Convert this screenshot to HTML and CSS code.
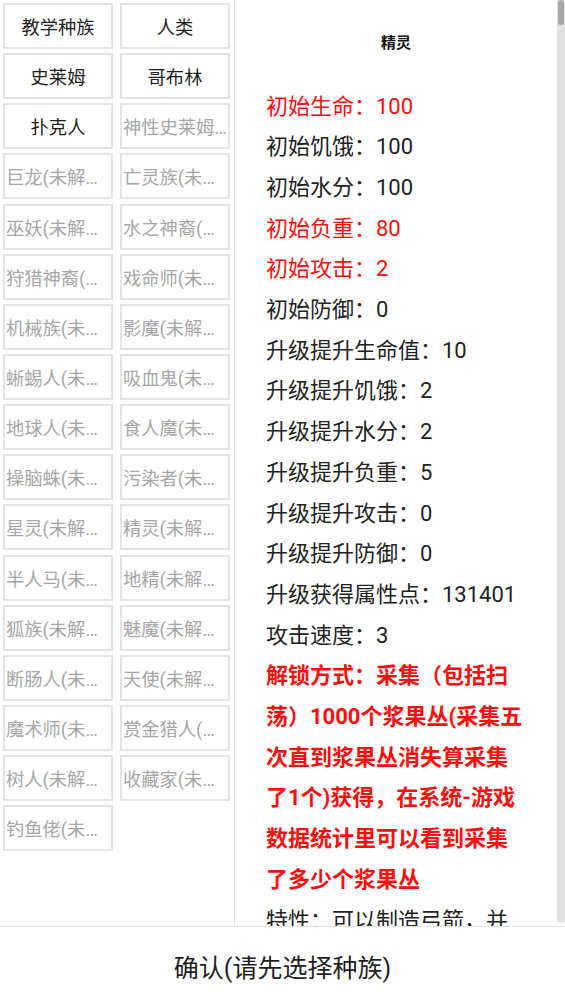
FILE: index.html
```html
<!DOCTYPE html>
<html lang="zh-CN">
<head>
<meta charset="utf-8">
<title>选择种族</title>
<link rel="stylesheet" href="styles.css">
</head>
<body>
<div class="app">
  <div class="main">
    <div class="races">
      <div class="race">教学种族</div>
      <div class="race">人类</div>
      <div class="race">史莱姆</div>
      <div class="race">哥布林</div>
      <div class="race">扑克人</div>
      <div class="race locked">神性史莱姆…</div>
      <div class="race locked">巨龙(未解…</div>
      <div class="race locked">亡灵族(未…</div>
      <div class="race locked">巫妖(未解…</div>
      <div class="race locked">水之神裔(…</div>
      <div class="race locked">狩猎神裔(…</div>
      <div class="race locked">戏命师(未…</div>
      <div class="race locked">机械族(未…</div>
      <div class="race locked">影魔(未解…</div>
      <div class="race locked">蜥蜴人(未…</div>
      <div class="race locked">吸血鬼(未…</div>
      <div class="race locked">地球人(未…</div>
      <div class="race locked">食人魔(未…</div>
      <div class="race locked">操脑蛛(未…</div>
      <div class="race locked">污染者(未…</div>
      <div class="race locked">星灵(未解…</div>
      <div class="race locked">精灵(未解…</div>
      <div class="race locked">半人马(未…</div>
      <div class="race locked">地精(未解…</div>
      <div class="race locked">狐族(未解…</div>
      <div class="race locked">魅魔(未解…</div>
      <div class="race locked">断肠人(未…</div>
      <div class="race locked">天使(未解…</div>
      <div class="race locked">魔术师(未…</div>
      <div class="race locked">赏金猎人(…</div>
      <div class="race locked">树人(未解…</div>
      <div class="race locked">收藏家(未…</div>
      <div class="race locked">钓鱼佬(未…</div>
    </div>
    <div class="detail">
      <div class="detail-body">
        <div class="title">精灵</div>
        <div class="stat red">初始生命：100</div>
        <div class="stat">初始饥饿：100</div>
        <div class="stat">初始水分：100</div>
        <div class="stat red">初始负重：80</div>
        <div class="stat red">初始攻击：2</div>
        <div class="stat">初始防御：0</div>
        <div class="stat">升级提升生命值：10</div>
        <div class="stat">升级提升饥饿：2</div>
        <div class="stat">升级提升水分：2</div>
        <div class="stat">升级提升负重：5</div>
        <div class="stat">升级提升攻击：0</div>
        <div class="stat">升级提升防御：0</div>
        <div class="stat">升级获得属性点：131401</div>
        <div class="stat">攻击速度：3</div>
        <div class="stat red bold">解锁方式：采集（包括扫荡）1000个浆果丛(采集五次直到浆果丛消失算采集了1个)获得，在系统-游戏数据统计里可以看到采集了多少个浆果丛</div>
        <div class="stat">特性：可以制造弓箭，并</div>
      </div>
      <div class="scrollbar"><div class="thumb"></div></div>
    </div>
  </div>
  <div class="confirm">确认(请先选择种族)</div>
</div>
</body>
</html>
```

FILE: styles.css
```css
html, body {
  margin: 0;
  padding: 0;
  background: #ffffff;
}

body {
  font-family: Roboto, "Noto Sans CJK SC", sans-serif;
  color: #222222;
}

.app {
  width: 565px;
  height: 1004px;
  display: flex;
  flex-direction: column;
  overflow: hidden;
}

.main {
  height: 926px;
  display: flex;
  overflow: hidden;
}

.races {
  width: 231px;
  flex: none;
  padding: 3px 0 0 3px;
  border-right: 1px solid #e2e2e2;
  display: grid;
  grid-template-columns: 110px 110px;
  grid-auto-rows: 46px;
  column-gap: 7px;
  row-gap: 4.15px;
  align-content: start;
}

.race {
  box-sizing: border-box;
  border: 2px solid #e4e4e4;
  display: flex;
  align-items: center;
  justify-content: center;
  font-size: 18.3px;
  white-space: nowrap;
  overflow: hidden;
  color: #1e1e1e;
}

.race.locked {
  justify-content: flex-start;
  padding-left: 1px;
  color: #a6a6a6;
}

.detail {
  flex: 1;
  display: flex;
  min-width: 0;
}

.detail-body {
  flex: 1;
  min-width: 0;
  padding: 0 31px;
  overflow: hidden;
}

.title {
  text-align: center;
  font-size: 15px;
  font-weight: bold;
  line-height: 20px;
  padding-top: 33px;
  margin-bottom: 33.5px;
  color: #111111;
}

.stat {
  font-size: 22px;
  line-height: 40.7px;
}

.red {
  color: #ff0d0d;
}

.bold {
  font-weight: bold;
}

.scrollbar {
  width: 8px;
  flex: none;
  margin-bottom: 3px;
  background: #e0e0e0;
  border-radius: 0 0 4px 4px;
}

.thumb {
  height: 25px;
  margin: 0 1px;
  background: #a8a8a8;
  border-radius: 3px;
}

.confirm {
  flex: 1;
  border-top: 1px solid #e2e2e2;
  display: flex;
  align-items: center;
  justify-content: center;
  font-size: 25px;
  color: #1e1e1e;
}
```
